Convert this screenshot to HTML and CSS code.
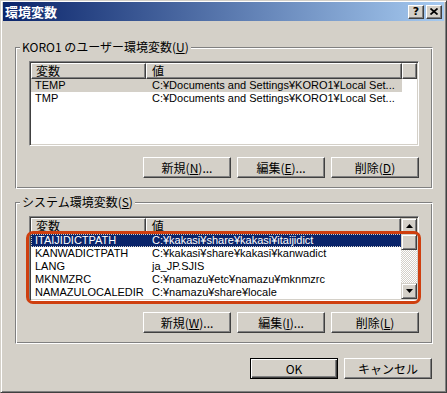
FILE: index.html
```html
<!DOCTYPE html>
<html lang="ja">
<head>
    <meta charset="UTF-8">
    <meta name="viewport" content="width=device-width, initial-scale=1.0">
    <title>環境変数</title>
    <link rel="stylesheet" href="styles.css">
</head>
<body>
<div class="window">
    <div class="titlebar">
        <span class="title">環境変数</span>
        <div class="caption-buttons">
            <button class="cap-btn help" type="button">?</button>
            <button class="cap-btn close" type="button">
                <svg width="8" height="7" viewBox="0 0 8 7"><path d="M0.5 0.5L7.5 6.5M7.5 0.5L0.5 6.5" stroke="#000" stroke-width="1.7"/></svg>
            </button>
        </div>
    </div>

    <fieldset class="group first">
        <legend>KORO1 のユーザー環境変数(<u>U</u>)</legend>
        <div class="list">
            <div class="list-main">
                <div class="list-head">
                    <div class="head-cell name">変数</div>
                    <div class="head-cell value">値</div>
                    <div class="head-cell filler"></div>
                </div>
                <div class="row inactive">
                    <span class="cell name">TEMP</span>
                    <span class="cell value">C:¥Documents and Settings¥KORO1¥Local Set...</span>
                </div>
                <div class="row">
                    <span class="cell name">TMP</span>
                    <span class="cell value">C:¥Documents and Settings¥KORO1¥Local Set...</span>
                </div>
            </div>
        </div>
        <div class="btn-row">
            <button class="btn" type="button">新規(<u>N</u>)...</button>
            <button class="btn" type="button">編集(<u>E</u>)...</button>
            <button class="btn" type="button">削除(<u>D</u>)</button>
        </div>
    </fieldset>

    <fieldset class="group second">
        <legend>システム環境変数(<u>S</u>)</legend>
        <div class="list-wrap">
            <div class="list">
                <div class="list-main">
                    <div class="list-head">
                        <div class="head-cell name">変数</div>
                        <div class="head-cell value">値</div>
                    </div>
                    <div class="row selected">
                        <span class="cell name">ITAIJIDICTPATH</span>
                        <span class="cell value">C:¥kakasi¥share¥kakasi¥itaijidict</span>
                    </div>
                    <div class="row">
                        <span class="cell name">KANWADICTPATH</span>
                        <span class="cell value">C:¥kakasi¥share¥kakasi¥kanwadict</span>
                    </div>
                    <div class="row">
                        <span class="cell name">LANG</span>
                        <span class="cell value">ja_JP.SJIS</span>
                    </div>
                    <div class="row">
                        <span class="cell name">MKNMZRC</span>
                        <span class="cell value">C:¥namazu¥etc¥namazu¥mknmzrc</span>
                    </div>
                    <div class="row">
                        <span class="cell name">NAMAZULOCALEDIR</span>
                        <span class="cell value">C:¥namazu¥share¥locale</span>
                    </div>
                </div>
                <div class="scrollbar">
                    <div class="sb-btn">
                        <svg width="7" height="4" viewBox="0 0 7 4"><path d="M3.5 0L7 4H0Z" fill="#000"/></svg>
                    </div>
                    <div class="sb-thumb"></div>
                    <div class="sb-track"></div>
                    <div class="sb-btn">
                        <svg width="7" height="4" viewBox="0 0 7 4"><path d="M0 0H7L3.5 4Z" fill="#000"/></svg>
                    </div>
                </div>
            </div>
            <div class="highlight"></div>
        </div>
        <div class="btn-row">
            <button class="btn" type="button">新規(<u>W</u>)...</button>
            <button class="btn" type="button">編集(<u>I</u>)...</button>
            <button class="btn" type="button">削除(<u>L</u>)</button>
        </div>
    </fieldset>

    <div class="footer">
        <button class="btn default" type="button">OK</button>
        <button class="btn" type="button">キャンセル</button>
    </div>
</div>
</body>
</html>
```

FILE: styles.css
```css
* {
    box-sizing: border-box;
}

body, html {
    margin: 0;
    padding: 0;
    overflow: hidden;
}
body {
    width: 447px;
    height: 393px;
    background: #d4d0c8;
    font-family: "Noto Sans CJK JP", sans-serif;
    font-size: 12px;
    color: #000;
}

.window {
    width: 447px;
    height: 393px;
    border: 1px solid;
    border-color: #d4d0c8 #404040 #404040 #d4d0c8;
    box-shadow: inset 1px 1px #fff, inset -1px -1px #808080;
    padding: 0 2px 2px 2px;
    display: flex;
    flex-direction: column;
}

/* title bar */
.titlebar {
    height: 19px;
    margin-top: 1px;
    display: flex;
    align-items: center;
    padding: 0 2px;
    background: linear-gradient(to right, #0a246a, #a6caf0);
}
.title {
    color: #fff;
    font-weight: bold;
    font-size: 13px;
    line-height: 19px;
}
.caption-buttons {
    margin-left: auto;
    display: flex;
    gap: 2px;
}
.cap-btn {
    width: 16px;
    height: 14px;
    padding: 0;
    display: flex;
    align-items: center;
    justify-content: center;
    background: #d4d0c8;
    border: 1px solid;
    border-color: #fff #404040 #404040 #fff;
    box-shadow: inset -1px -1px #808080;
}
.help {
    font-family: "DejaVu Sans", sans-serif;
    font-weight: bold;
    font-size: 11px;
    line-height: 12px;
    color: #000;
}

/* group boxes */
.group {
    margin: 0 11px 0 12px;
    padding: 7px 13px 10px 13px;
    border: 1px solid;
    border-color: #808080 #fff #fff #808080;
    box-shadow: inset 1px 1px #fff, inset -1px -1px #808080;
    min-width: 0;
}
.group.first {
    margin-top: 19px;
}
.group.second {
    margin-top: 6px;
}
.group legend {
    margin-left: -9px;
    padding: 0 2px;
    line-height: 14px;
    background: #d4d0c8;
}

/* list views */
.list-wrap {
    position: relative;
}
.list {
    height: 85px;
    border: 1px solid;
    border-color: #808080 #fff #fff #808080;
    box-shadow: inset 1px 1px #404040, inset -1px -1px #d4d0c8;
    padding: 1px;
    background: #fff;
    display: flex;
}
.list-main {
    flex: 1;
    overflow: hidden;
}
.list-head {
    display: flex;
    height: 16px;
}
.head-cell {
    height: 16px;
    line-height: 14px;
    background: #d4d0c8;
    border: 1px solid;
    border-color: #fff #404040 #404040 #fff;
    box-shadow: inset -1px -1px #808080;
    white-space: nowrap;
}
.head-cell.name {
    width: 115px;
    padding-left: 4px;
}
.head-cell.value {
    width: 256px;
    padding-left: 5px;
}
.head-cell.filler {
    flex: 1;
}
.row {
    display: flex;
    width: 371px;
    height: 13px;
    font-family: "Liberation Sans", "Noto Sans CJK JP", sans-serif;
    font-size: 11px;
    line-height: 13px;
    white-space: nowrap;
}
.cell {
    overflow: hidden;
}
.cell.name {
    width: 117px;
    flex-shrink: 0;
    padding-left: 4px;
}
.cell.value {
    flex: 1;
    padding-left: 4px;
}
.row.inactive {
    background: #d4d0c8;
}
.row.selected {
    background: #0a246a;
    color: #fff;
    outline: 1px dotted #d4d0c8;
    outline-offset: -1px;
}

/* scrollbar */
.scrollbar {
    width: 16px;
    display: flex;
    flex-direction: column;
}
.sb-btn, .sb-thumb {
    width: 16px;
    height: 16px;
    display: flex;
    align-items: center;
    justify-content: center;
    background: #d4d0c8;
    border: 1px solid;
    border-color: #d4d0c8 #404040 #404040 #d4d0c8;
    box-shadow: inset 1px 1px #fff, inset -1px -1px #808080;
}
.sb-track {
    flex: 1;
    background-image: conic-gradient(#fff 25%, #d4d0c8 0 50%, #fff 0 75%, #d4d0c8 0);
    background-size: 2px 2px;
}

.highlight {
    position: absolute;
    left: -3px;
    top: 15px;
    width: 395px;
    height: 73px;
    border: 3px solid #cf3f0f;
    border-radius: 7px;
    pointer-events: none;
}

/* push buttons */
.btn-row {
    display: flex;
    justify-content: flex-end;
    gap: 6px;
    margin-top: 11px;
}
.btn {
    width: 88px;
    height: 21px;
    padding: 0;
    font-family: inherit;
    font-size: 12px;
    line-height: 17px;
    color: #000;
    background: #d4d0c8;
    border: 1px solid;
    border-color: #fff #404040 #404040 #fff;
    box-shadow: inset -1px -1px #808080;
    white-space: nowrap;
}
.btn.default {
    border-color: #000;
    box-shadow: inset 1px 1px #fff, inset -1px -1px #404040, inset -2px -2px #808080;
}

.footer {
    display: flex;
    justify-content: flex-end;
    gap: 6px;
    margin-top: 14px;
    padding-right: 12px;
}
```
